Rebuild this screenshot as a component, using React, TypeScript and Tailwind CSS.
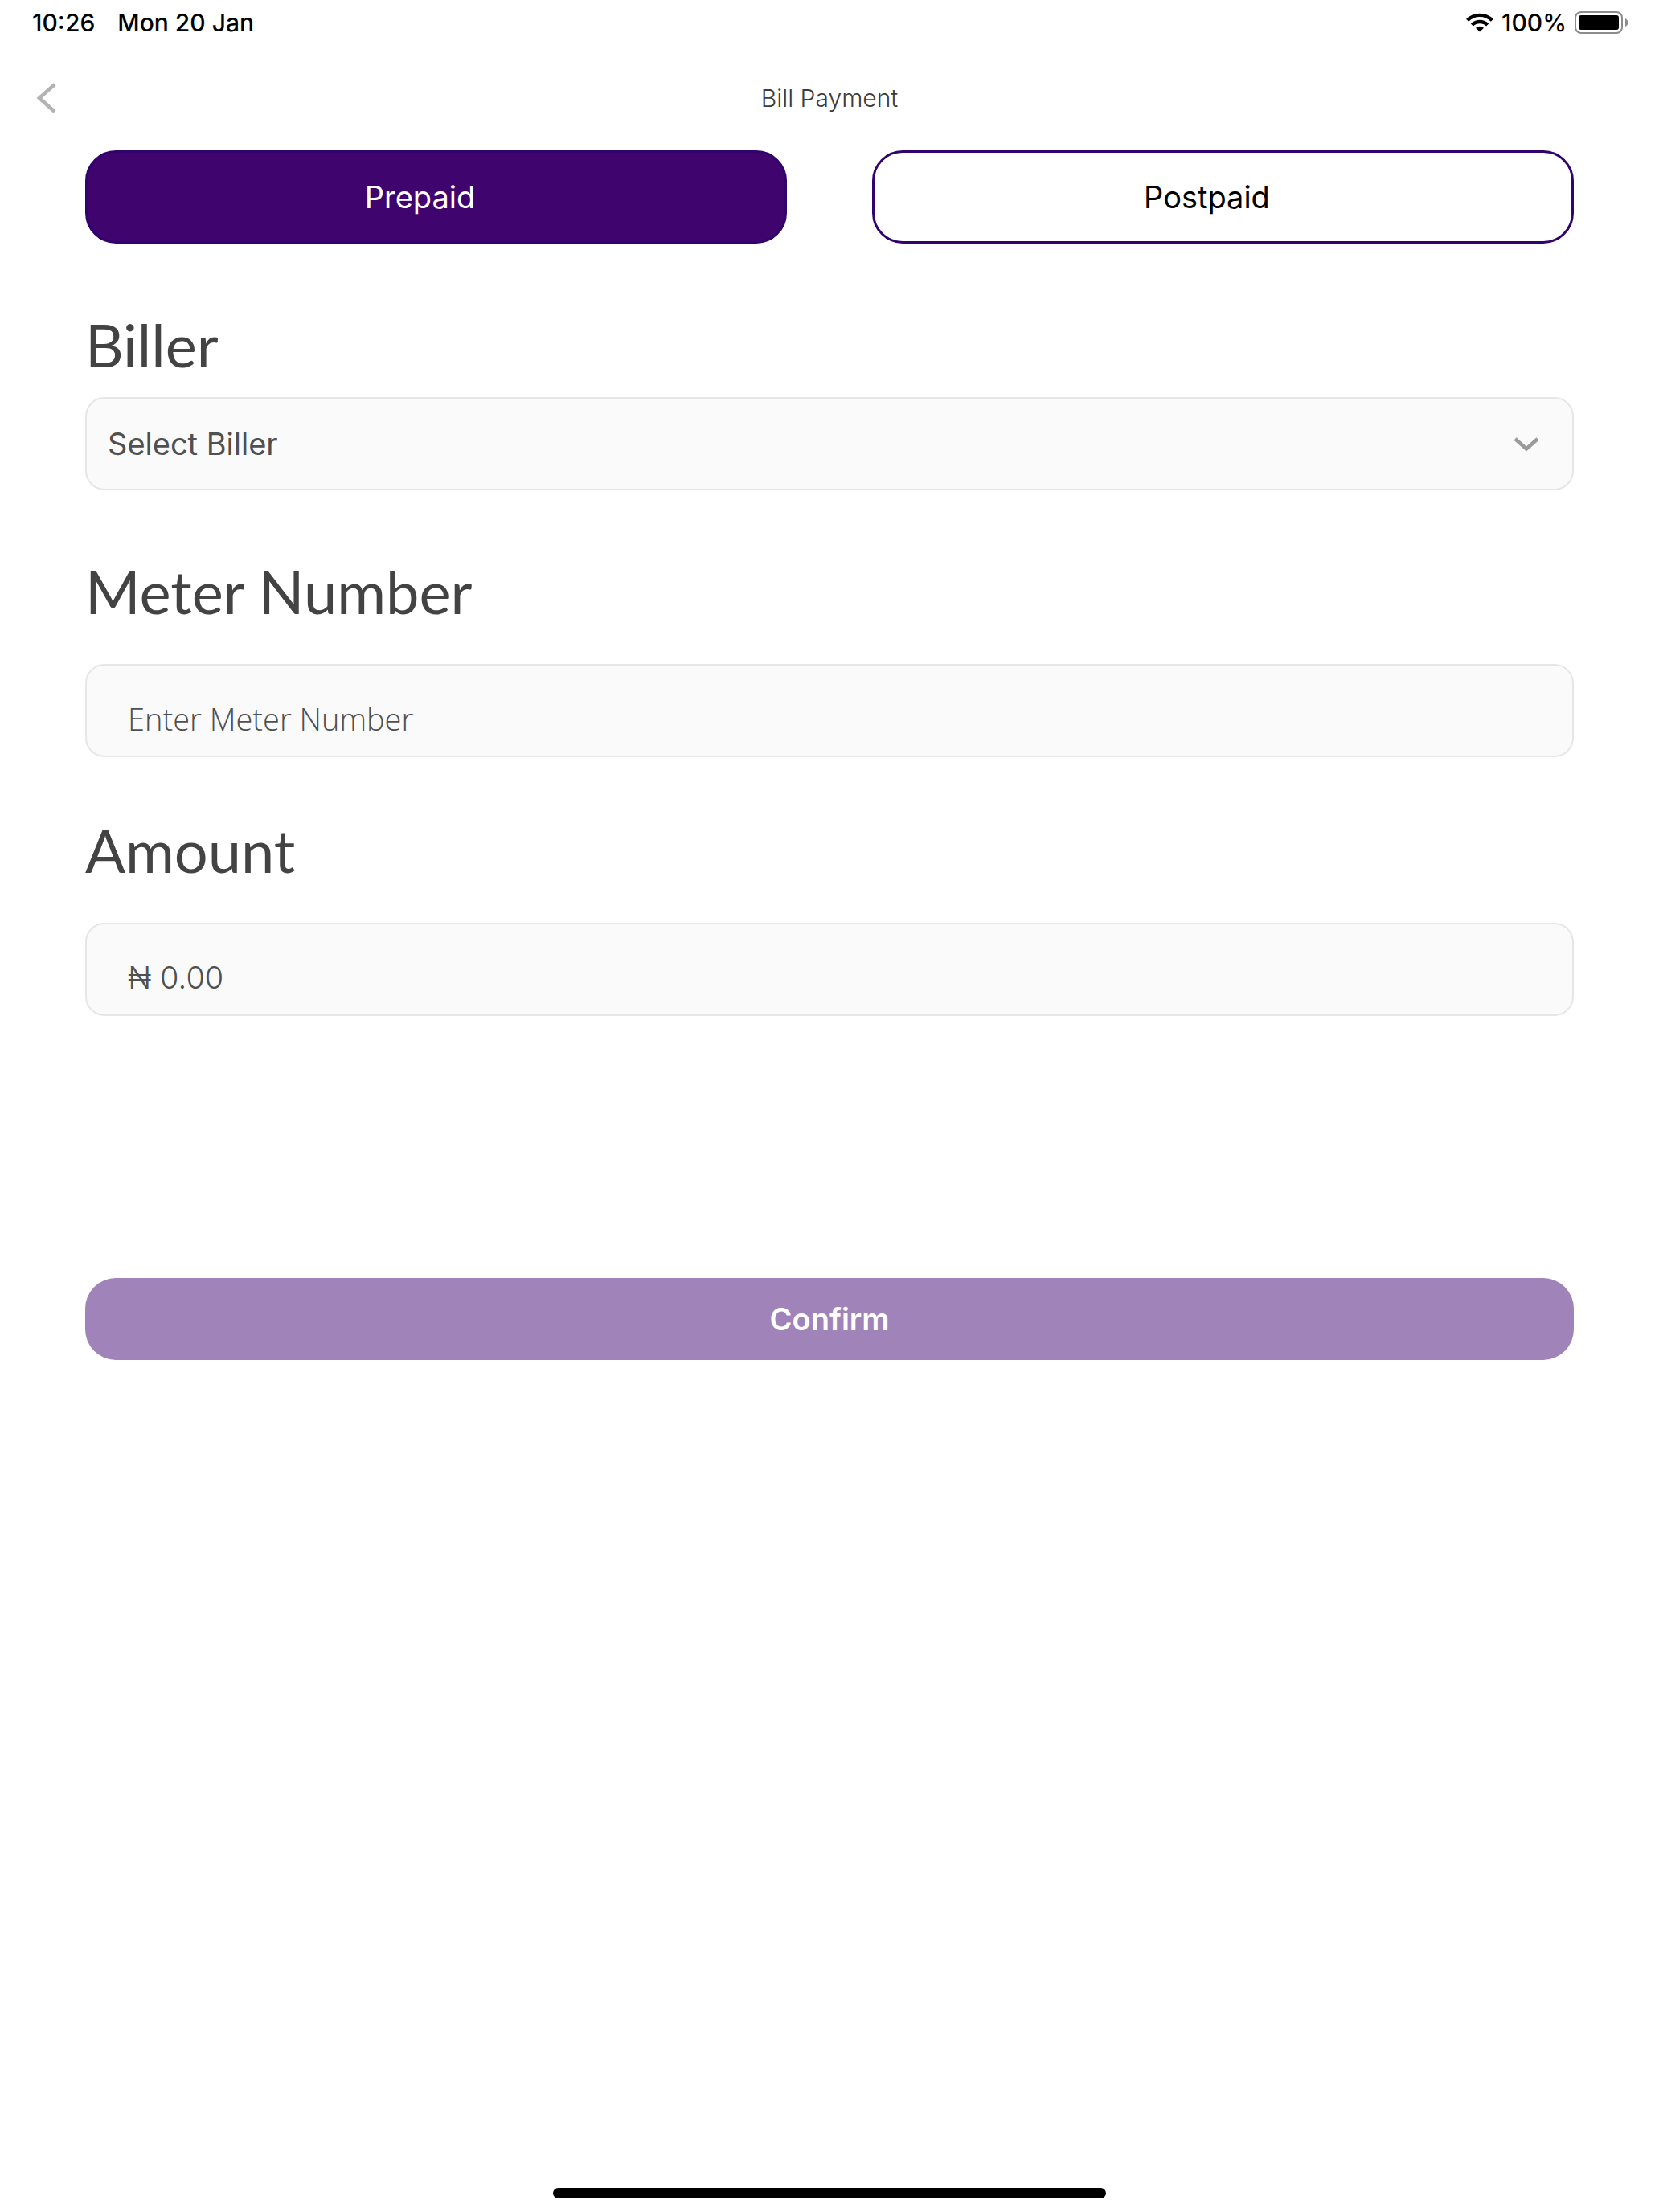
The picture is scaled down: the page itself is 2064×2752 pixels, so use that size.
import { useState } from "react";
import type { ReactNode } from "react";

function StatusBar() {
  return (
    <div className="flex h-14 items-center justify-between pr-[38px] pl-10 font-['Inter',sans-serif] text-[30px] leading-8 font-medium text-black">
      <div className="flex gap-7">
        <span>10:26</span>
        <span>Mon 20 Jan</span>
      </div>
      <div className="flex items-center gap-2.5">
        <svg className="h-6 w-[34px]" viewBox="0 0 34 24" aria-hidden="true">
          <g fill="none" stroke="#000" strokeWidth="4.4">
            <path d="M1.6 9.2A22 22 0 0 1 32.4 9.2" />
            <path d="M7.4 15A13.6 13.6 0 0 1 26.6 15" />
          </g>
          <path d="M17 23.6L12 18.8A7 7 0 0 1 22 18.8Z" />
        </svg>
        <span>100%</span>
        <svg className="h-7 w-[67px]" viewBox="0 0 67 28" aria-hidden="true">
          <rect x="1" y="1" width="58" height="26" rx="7" fill="none" stroke="#8c8c8c" strokeWidth="2" />
          <rect x="5" y="5" width="50" height="18" rx="3" />
          <path d="M63 9Q66.500 11 66.500 14T63 19Z" fill="#8c8c8c" />
        </svg>
      </div>
    </div>
  );
}

function TabButton({ active, onClick, children }: { active: boolean; onClick: () => void; children: ReactNode }) {
  const look = active ? "bg-[#3f046e] text-white" : "bg-white text-black";
  return (
    <button
      type="button"
      aria-pressed={active}
      onClick={onClick}
      className={`h-[116px] flex-1 rounded-[38px] border-3 border-[#30046c] pr-10 font-['Inter',sans-serif] text-[38px] leading-10 ${look}`}
    >
      {children}
    </button>
  );
}

const labelClass = "font-['Lato',sans-serif] text-[74px] leading-[84px] text-[#434343]";
const boxClass = "h-[116px] w-full rounded-3xl border-2 border-[#e6e6e6] bg-[#fafafa] text-[38px] leading-10 text-[#505050]";

function TextField({ id, label, placeholder, font }: { id: string; label: string; placeholder: string; font: string }) {
  return (
    <div className="flex flex-col gap-12">
      <label htmlFor={id} className={labelClass}>
        {label}
      </label>
      <input
        id={id}
        type="text"
        placeholder={placeholder}
        className={`${boxClass} ${font} px-[51px] pt-5 font-light placeholder:text-[#505050] placeholder:opacity-100`}
      />
    </div>
  );
}

export default function App() {
  const [plan, setPlan] = useState("prepaid");
  return (
    <div className="flex min-h-screen flex-col bg-white">
      <StatusBar />
      <header className="grid h-[131px] grid-cols-[1fr_auto_1fr] items-center px-[42px]">
        <button type="button" aria-label="Back" className="w-10">
          <svg className="h-10 w-8" viewBox="0 0 32 40" aria-hidden="true">
            <path d="M26 3L7 20L26 37" fill="none" stroke="#b3b3b3" strokeWidth="4.6" />
          </svg>
        </button>
        <h1 className="font-['Inter',sans-serif] text-[30px] leading-8 font-light text-[#3c3c3c]">Bill Payment</h1>
      </header>
      <main className="flex flex-1 flex-col px-[106px]">
        <div className="flex gap-[106px]">
          <TabButton active={plan === "prepaid"} onClick={() => setPlan("prepaid")}>
            Prepaid
          </TabButton>
          <TabButton active={plan === "postpaid"} onClick={() => setPlan("postpaid")}>
            Postpaid
          </TabButton>
        </div>
        <form className="mt-[84px] flex flex-col" onSubmit={(e) => e.preventDefault()}>
          <label htmlFor="biller" className={labelClass}>
            Biller
          </label>
          <div className="relative mt-[23px]">
            <select id="biller" className={`${boxClass} appearance-none px-[26px] font-['Inter',sans-serif]`}>
              <option>Select Biller</option>
            </select>
            <svg
              className="pointer-events-none absolute top-[49px] right-[43px] h-5 w-8"
              viewBox="0 0 32 20"
              aria-hidden="true"
            >
              <path d="M2 3L16 15.500L30 3" fill="none" stroke="#9a9a9a" strokeWidth="4.600" />
            </svg>
          </div>
          <div className="mt-[84px] flex flex-col gap-[74px]">
            <TextField id="meter" label="Meter Number" placeholder="Enter Meter Number" font="font-['Open_Sans',sans-serif]" />
            <TextField id="amount" label="Amount" placeholder="₦ 0.00" font="font-['Inter',sans-serif]" />
          </div>
          <button
            type="submit"
            disabled
            className="mt-[326px] h-[102px] rounded-[38px] bg-[#a083b8] font-['Inter',sans-serif] text-[38px] leading-10 font-semibold text-white"
          >
            Confirm
          </button>
        </form>
      </main>
      <div className="mb-[17px] h-[13px] w-1/3 self-center rounded-full bg-black" />
    </div>
  );
}
